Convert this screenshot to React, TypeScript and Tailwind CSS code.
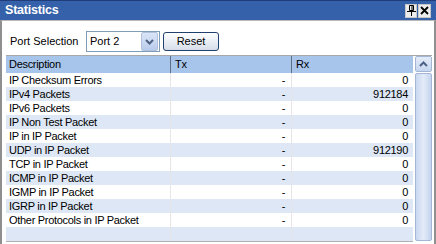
import React from "react";

type Row = { name: string; tx: string; rx: string };

const rows: Row[] = [
  { name: "IP Checksum Errors", tx: "-", rx: "0" },
  { name: "IPv4 Packets", tx: "-", rx: "912184" },
  { name: "IPv6 Packets", tx: "-", rx: "0" },
  { name: "IP Non Test Packet", tx: "-", rx: "0" },
  { name: "IP in IP Packet", tx: "-", rx: "0" },
  { name: "UDP in IP Packet", tx: "-", rx: "912190" },
  { name: "TCP in IP Packet", tx: "-", rx: "0" },
  { name: "ICMP in IP Packet", tx: "-", rx: "0" },
  { name: "IGMP in IP Packet", tx: "-", rx: "0" },
  { name: "IGRP in IP Packet", tx: "-", rx: "0" },
  { name: "Other Protocols in IP Packet", tx: "-", rx: "0" },
  { name: "", tx: "", rx: "" },
];

const PinIcon = () => (
  <svg width="9" height="11" viewBox="0 0 9 11" aria-hidden>
    <path d="M2.5 0.5h4v5h-4z" fill="none" stroke="#000" />
    <path d="M5 1v4.5" stroke="#000" />
    <path d="M0 6.5h9" stroke="#000" />
    <path d="M4.5 6.5v4.5" stroke="#000" />
  </svg>
);

const CloseIcon = () => (
  <svg width="9" height="9" viewBox="0 0 9 9" aria-hidden>
    <path d="M1 1l7 7M8 1l-7 7" stroke="#000" strokeWidth="1.8" />
  </svg>
);

const Chevron = ({ up }: { up?: boolean }) => (
  <svg width="9" height="6" viewBox="0 0 9 6" aria-hidden className={up ? "rotate-180" : ""}>
    <path d="M1 1l3.5 3.5L8 1" fill="none" stroke="#4d6185" strokeWidth="2" />
  </svg>
);

export default function App() {
  return (
    <div className="w-[436px] h-[244px] overflow-hidden bg-white font-['Liberation_Sans',Arial,sans-serif] text-black flex flex-col">
      {/* title bar */}
      <div className="h-[20px] shrink-0 bg-[#3461a9] border-t border-[#1f3d78] flex items-center justify-between pl-[5px] pr-[5px]">
        <span className="text-white font-bold text-[12.5px] tracking-[-0.2px] leading-none">Statistics</span>
        <div className="flex gap-[1px]">
          <div className="w-[12px] h-[14px] bg-[#ececec] border border-[#c8c8c8] flex items-center justify-center">
            <PinIcon />
          </div>
          <div className="w-[13px] h-[14px] bg-[#ececec] border border-[#c8c8c8] flex items-center justify-center">
            <CloseIcon />
          </div>
        </div>
      </div>

      {/* body */}
      <div className="flex-1 flex flex-col border-t border-x-2 border-t-[#b8b8b8] border-x-[#8f8f8f] pl-[4px] pr-[2px]">
        <div className="flex items-center pt-[10px] pb-[3px]">
          <span className="w-[80px] pl-[4px] text-[11px] leading-none">Port Selection</span>
          <div className="w-[74px] h-[21px] border border-[#7f9db9] bg-white flex items-center justify-between">
            <span className="pl-[3px] text-[11px] leading-none">Port 2</span>
            <div className="w-[17px] h-[19px] mr-[1px] rounded-[2px] border border-[#b2c2de] bg-gradient-to-b from-[#dbe5f7] to-[#b9cbeb] flex items-center justify-center">
              <Chevron />
            </div>
          </div>
          <button className="ml-[3px] w-[56px] h-[19px] rounded-[3px] border border-[#22406e] bg-gradient-to-b from-white to-[#d6dde9] text-[11px] leading-none">
            Reset
          </button>
        </div>

        <div className="flex border-t border-[#a8a8a8]">
          <div className="w-[407px]">
            <div className="flex h-[17px] bg-[#a7c4ea] text-[11px] tracking-[-0.3px] leading-[17px]">
              <div className="w-[165px] pl-[3px] border-r border-[#5f6f86]">Description</div>
              <div className="w-[121px] pl-[4px] border-r border-[#5f6f86]">Tx</div>
              <div className="w-[121px] pl-[4px]">Rx</div>
            </div>
            {rows.map((r, i) => (
              <div
                key={i}
                className={`flex h-[14px] text-[11px] tracking-[-0.3px] leading-[14px] ${i % 2 === 1 ? "bg-[#dde7f5]" : "bg-white"}`}
              >
                <div className="w-[165px] pl-[3px] border-r border-[#e6e6e6] whitespace-nowrap">{r.name}</div>
                <div className="w-[121px] pr-[6px] text-right border-r border-[#e6e6e6]">{r.tx}</div>
                <div className="w-[121px] pr-[5px] text-right">{r.rx}</div>
              </div>
            ))}
            <div className="border-t border-[#b0b0b0]" />
          </div>

          {/* scrollbar */}
          <div className="ml-[2px] w-[17px] h-[185px] flex flex-col gap-[1px]">
            <div className="h-[16px] rounded-[2px] border border-[#a3b6d6] bg-gradient-to-b from-[#e4ecf9] to-[#c6d6ef] flex items-center justify-center">
              <Chevron up />
            </div>
            <div className="flex-1 rounded-[2px] border border-[#a3b6d6] bg-gradient-to-r from-[#c9d8f0] via-[#e3ebf8] to-[#c4d4ee]" />
          </div>
        </div>
      </div>
    </div>
  );
}
